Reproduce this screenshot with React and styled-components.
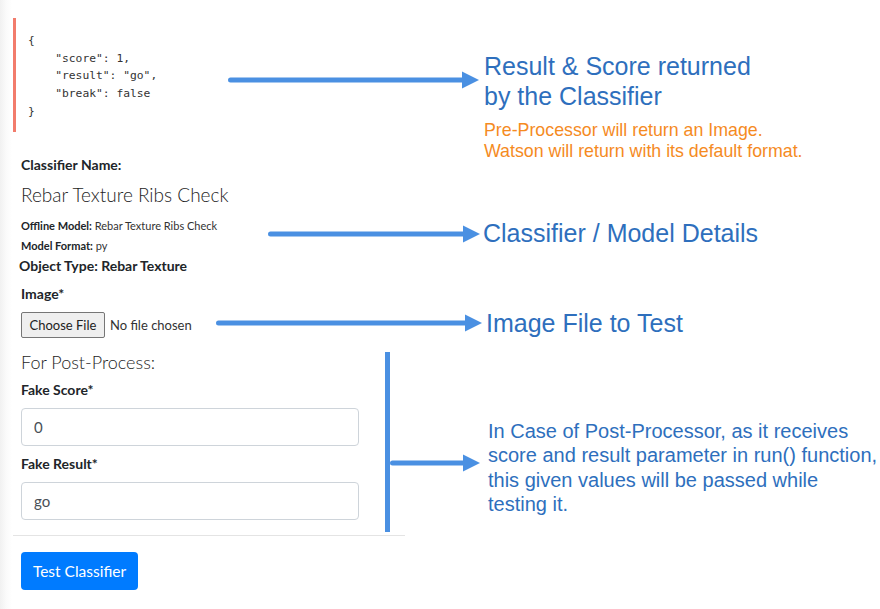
import styled, { createGlobalStyle } from "styled-components"

const GlobalStyle = createGlobalStyle`
    html, body {
        margin : 0;
        padding : 0;
    }
    body {
        width : 880px;
        min-height : 609px;
        background : linear-gradient(to right, #f1f1f1 0, #fafafa 6px, #fff 12px);
        font-family : Lato, "Open Sans", sans-serif;
        color : #212529;
    }
`
const BLUE = "#4a90e2"

const Page = styled.div`
    padding : 18px 0 0 13px;
    display : flex;
    flex-direction : column;
    align-items : flex-start;
`
const Row = styled.div`
    display : flex;
    align-items : flex-start;
    margin-top : ${p => p.$top || 0}px;
    padding-left : ${p => p.$inset ?? 8}px;
`
const Column = styled.div`
    width : ${p => p.$width}px;
    flex-shrink : 0;
    display : flex;
    flex-direction : column;
    align-items : flex-start;
`
const CodeBlock = styled.pre`
    margin : 0;
    width : 200px;
    flex-shrink : 0;
    border-left : 3px solid #f27c6c;
    padding : 14px 0 11px 12px;
    font-family : "DejaVu Sans Mono", "Liberation Mono", monospace;
    font-size : 11.3px;
    line-height : 17.7px;
    color : #333;
`
const ArrowSlot = styled.div`
    margin-top : ${p => p.$top}px;
    flex-shrink : 0;
    display : flex;
`
const ArrowSvg = styled.svg`
    display : block;
`
const Callout = styled.div`
    margin : 33px 0 -8px 5px;
    font-family : "Liberation Sans", Arial, sans-serif;
`
const CalloutTitle = styled.div`
    font-size : 25px;
    line-height : 30px;
    color : #2e6fbd;
`
const CalloutNote = styled.div`
    margin-top : 8.5px;
    font-size : 17.8px;
    line-height : 21.7px;
    color : #f58b1f;
`
const Annotation = styled.div`
    margin-top : ${p => p.$top}px;
    display : flex;
    align-items : center;
    gap : ${p => p.$gap || 3}px;
`
const AnnotationLabel = styled.span`
    font-family : "Liberation Sans", Arial, sans-serif;
    font-size : 25px;
    line-height : 29px;
    color : #2e6fbd;
    white-space : nowrap;
`
const FieldLabel = styled.label`
    display : block;
    margin-top : ${p => p.$top || 0}px;
    font-size : 14px;
    font-weight : 700;
    line-height : 20px;
    color : #212529;
`
const ClassifierTitle = styled.h4`
    margin : 5.6px 0 0;
    font-size : 19px;
    font-weight : 300;
    line-height : 28px;
    color : #1e1e1e;
`
const Meta = styled.div`
    margin-top : ${p => p.$top || 0}px;
    font-size : 11px;
    line-height : 20px;
    color : #333;
    b {
        color : #212529;
    }
`
const ObjectType = styled.div`
    margin-left : -2px;
    font-size : 14px;
    font-weight : 700;
    line-height : 20px;
    color : #212529;
`
const FileInput = styled.input`
    margin-top : 8px;
    font-family : Lato, sans-serif;
    font-size : 13px;
    color : #333;
    &::file-selector-button {
        height : 26px;
        width : 84px;
        margin-right : 5px;
        font-family : Lato, sans-serif;
        font-size : 13px;
        color : #222;
        background : #efefef;
        border : 1px solid #767676;
        border-radius : 2px;
    }
`
const SectionTitle = styled.h5`
    margin : 0;
    font-size : 18px;
    font-weight : 300;
    line-height : 24px;
    color : #1e1e1e;
`
const TextInput = styled.input`
    box-sizing : border-box;
    margin-top : 8px;
    width : 338px;
    height : 38px;
    padding : 0 12px;
    border : 1px solid #ced4da;
    border-radius : 4px;
    font-family : Lato, sans-serif;
    font-size : 15px;
    color : #495057;
    background : #fff;
`
const Bracket = styled.div`
    margin : 2px 0 0 26px;
    height : 180px;
    border-left : 5px solid ${BLUE};
    display : flex;
    align-items : flex-start;
`
const BracketNote = styled.p`
    margin : 67px 0 0 8px;
    font-family : "Liberation Sans", Arial, sans-serif;
    font-size : 20px;
    line-height : 24.5px;
    color : #2e6fbd;
    white-space : nowrap;
`
const Divider = styled.hr`
    margin : 3px 0 0;
    width : 392px;
    height : 1px;
    border : none;
    background : #e4e4e4;
`
const SubmitButton = styled.button`
    margin : 16px 0 0 8px;
    width : 117px;
    height : 38px;
    border : none;
    border-radius : 4px;
    background : #007bff;
    color : #fff;
    font-family : Lato, sans-serif;
    font-size : 15.5px;
    cursor : pointer;
`

const Arrow = ({ width }) => (
    <ArrowSvg width={width} height={18} viewBox={`0 0 ${width} 18`}>
        <line x1="2.5" y1="9" x2={width - 14} y2="9" stroke={BLUE} strokeWidth="5" strokeLinecap="round" />
        <polygon points={`${width - 17},0.5 ${width},9 ${width - 17},17.5`} fill={BLUE} />
    </ArrowSvg>
)

const json = `{
    "score": 1,
    "result": "go",
    "break": false
}`

const App = () => {
    return (
        <>
            <GlobalStyle />
            <Page>
                <Row $inset={0}>
                    <CodeBlock>{json}</CodeBlock>
                    <ArrowSlot $top={53}><Arrow width={251} /></ArrowSlot>
                    <Callout>
                        <CalloutTitle>Result &amp; Score returned<br />by the Classifier</CalloutTitle>
                        <CalloutNote>Pre-Processor will return an Image.<br />Watson will return with its default format.</CalloutNote>
                    </Callout>
                </Row>
                <Row>
                    <Column $width={247}>
                        <FieldLabel>Classifier Name:</FieldLabel>
                        <ClassifierTitle>Rebar Texture Ribs Check</ClassifierTitle>
                        <Meta $top={7.8}><b>Offline Model:</b> Rebar Texture Ribs Check</Meta>
                        <Meta><b>Model Format:</b> py</Meta>
                        <ObjectType>Object Type: Rebar Texture</ObjectType>
                    </Column>
                    <Annotation $top={64.5}>
                        <Arrow width={212} />
                        <AnnotationLabel>Classifier / Model Details</AnnotationLabel>
                    </Annotation>
                </Row>
                <Row $top={8}>
                    <Column $width={195}>
                        <FieldLabel>Image*</FieldLabel>
                        <FileInput type="file" />
                    </Column>
                    <Annotation $top={24.5} $gap={4}>
                        <Arrow width={266} />
                        <AnnotationLabel>Image File to Test</AnnotationLabel>
                    </Annotation>
                </Row>
                <Row $top={11.5}>
                    <Column $width={338}>
                        <SectionTitle>For Post-Process:</SectionTitle>
                        <FieldLabel $top={6.5}>Fake Score*</FieldLabel>
                        <TextInput defaultValue="0" />
                        <FieldLabel $top={7.3}>Fake Result*</FieldLabel>
                        <TextInput defaultValue="go" />
                    </Column>
                    <Bracket>
                        <ArrowSlot $top={102}><Arrow width={90} /></ArrowSlot>
                        <BracketNote>
                            In Case of Post-Processor, as it receives<br />
                            score and result parameter in run() function,<br />
                            this given values will be passed while<br />
                            testing it.
                        </BracketNote>
                    </Bracket>
                </Row>
                <Divider />
                <SubmitButton>Test Classifier</SubmitButton>
            </Page>
        </>
    )
}

export default App
